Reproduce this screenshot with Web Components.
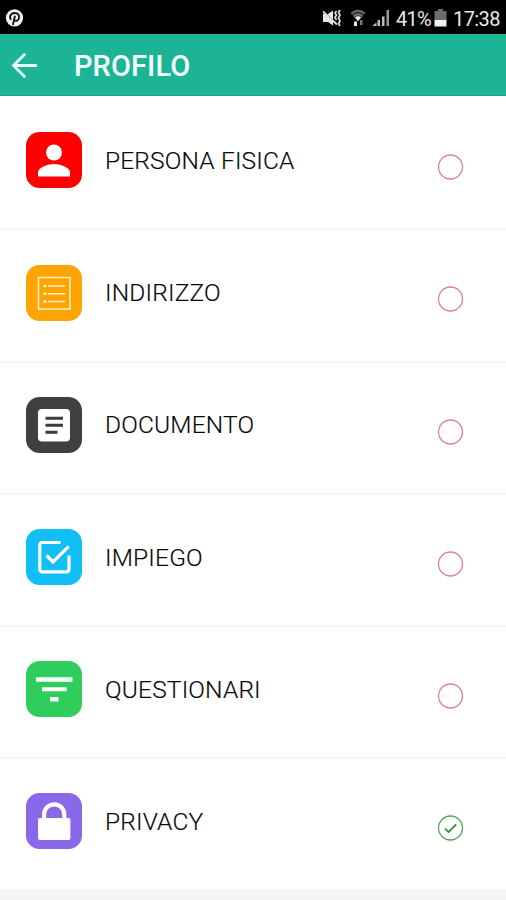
<!DOCTYPE html>
<html lang="it">
<head>
<meta charset="utf-8">
<title>Profilo</title>
<style>
body{margin:0;background:#f4f4f5;font-family:Roboto,"Liberation Sans",sans-serif}
</style>
</head>
<body>
<profile-screen></profile-screen>
<script>
const define = (name, html) => {
  const t = document.createElement('template');
  t.innerHTML = html;
  customElements.define(name, class extends HTMLElement {
    constructor() {
      super();
      this.attachShadow({mode: 'open'}).append(t.content.cloneNode(true));
    }
  });
};

const icons = {
  person: '<circle cx="28" cy="20.5" r="8"/><path d="M12 44.5v-4.2c0-5.200 10.500-8.300 16-8.300s16 3.100 16 8.300v4.200z"/>',
  list: '<g fill="none" stroke="#fff0c8"><rect x="12.500" y="12.500" width="31.500" height="31.500" stroke-width="1.500"/><path d="M22 21h17M22 28.800h17M22 36.600h17" stroke-width="1.500"/><path d="M17.500 21h3M17.500 28.800h3M17.500 36.600h3" stroke-width="2.600"/></g>',
  document: '<rect x="12" y="12" width="32" height="32.500" rx="4"/><path d="M19.500 21.200h17.500M19.500 28.200h17.500M19.500 35.300h12" fill="none" stroke="#3b3b3b" stroke-width="3"/>',
  check: '<path d="M34.500 13.500H16.300a2.500 2.500 0 0 0-2.500 2.500v24.300a2.500 2.500 0 0 0 2.500 2.500h24.200a2.500 2.500 0 0 0 2.500-2.500V26.500M20.500 26.500l6.500 6.500L42.700 17.300" fill="none" stroke="#fff" stroke-width="3.200"/>',
  filter: '<path d="M10 16.300h36.500v4.400H10zM16 26.300h24.500v4H16zM24 36h8.500v4.500H24z"/>',
  lock: '<path d="M14 25h2v-3.500a12.200 12.200 0 0 1 24.400 0V25h2a2 2 0 0 1 2 2v18a2 2 0 0 1-2 2H14a2 2 0 0 1-2-2V27a2 2 0 0 1 2-2zm6.200 0h16v-3.500a8 8 0 0 0-16 0z" fill-rule="evenodd"/>'
};

customElements.define('tile-icon', class extends HTMLElement {
  constructor() {
    super();
    this.attachShadow({mode: 'open'}).innerHTML = `<style>
      :host{display:block;width:56px;height:56px;border-radius:13.500px;background:${this.getAttribute('color')}}
      svg{display:block;fill:#fff}
    </style><svg width="56" height="56" viewBox="0 0 56 56">${icons[this.getAttribute('name')]}</svg>`;
  }
});

customElements.define('state-mark', class extends HTMLElement {
  constructor() {
    super();
    const done = this.hasAttribute('done');
    this.attachShadow({mode: 'open'}).innerHTML = `<style>:host,svg{display:block}</style>
      <svg width="26" height="26" viewBox="0 0 26 26" fill="none" stroke="${done ? '#58a35c' : '#db8388'}">
      <circle cx="12.500" cy="13" r="12" stroke-width="1.300"/>
      ${done ? '<path d="M7 13.500l3.500 3.500 7.700-7.700" stroke="#278b2c" stroke-width="1.700"/>' : ''}</svg>`;
  }
});

define('status-bar', `<style>
  :host{display:flex;align-items:flex-start;height:34px;background:#000;color:#e8e8e8;box-sizing:border-box;padding:0 6px 0 5px}
  svg{display:block;flex:none}
  .pin{margin:8px auto 0 0}
  .mute{margin:9px 8px 0 0}.wifi{margin:9px 5px 0 0}.signal{margin:9px 6px 0 0}
  .bat{margin:9px 6px 0 2px}
  span{font-size:20px;line-height:39px;white-space:nowrap}
  .pct{width:36px;letter-spacing:-.75px}.time{width:47px;letter-spacing:-.6px}
</style>
<svg class="pin" width="19" height="19" viewBox="0 0 19 19"><circle cx="9.500" cy="9.800" r="8.600" fill="#f2f2f2"/><path d="M6 11.700C3.600 8 6.300 5 9.700 5c3.200 0 5 2.100 4.300 5-.6 2.500-3 3.700-4.700 2M10 7.800L7.800 17" fill="none" stroke="#111" stroke-width="1.800"/></svg>
<svg class="mute" width="20" height="18" viewBox="0 0 20 18"><path d="M1 5h5l5-3.500v15L6 13H1z" fill="#e8e8e8"/><path d="M2 2l13 13" stroke="#000" stroke-width="1"/><path d="M1 2.500l14 13" stroke="#ddd" stroke-width="1.800"/><path d="M14.500 2l-1.500 2 1.500 2-1.500 2.500 1.500 2.500M18 1l-1.500 2.500 1.500 2.500-1.500 3 1.500 3-1.500 3 1.500 2" fill="none" stroke="#ddd" stroke-width="1.700"/></svg>
<svg class="wifi" width="16" height="18" viewBox="0 0 16 18"><path d="M1 4.500Q8-1.500 15 4.500L8 13z" fill="#3c3c3c"/><path d="M1 4.500Q8-1.500 15 4.500M3.500 7.500Q8 3.500 12.500 7.500" fill="none" stroke="#777" stroke-width="1.400"/><path d="M5 8.500Q8 6 11 8.500L8 12z" fill="#eee"/><path d="M4 12.500h3V17H4z" fill="#eee"/><path d="M10 11h2.500v5H10z" fill="#777"/></svg>
<svg class="signal" width="19" height="18" viewBox="0 0 19 18"><path d="M1 17l4.500-3.500V17zM6.500 11H9v6H6.500zM11 7.500h2.500V17H11z" fill="#bbb"/><path d="M15.500 1H18v16h-2.500z" fill="#999"/></svg>
<span class="pct">41%</span>
<svg class="bat" width="13" height="18" viewBox="0 0 13 18"><path d="M4 0h5v2h3.500v9H.5V2H4z" fill="#6d6d6d"/><path d="M.5 11h12v6.500H.5z" fill="#f2f2f2"/></svg>
<span class="time">17:38</span>`);

define('app-header', `<style>
  :host{display:flex;align-items:center;height:62px;box-sizing:border-box;background:#1db496;border-bottom:1px solid #12a486;color:#f3fffc;padding:1px 0 0 11px}
  svg{display:block;margin:0 36px 0 0}
  h1{margin:0;font-size:29px;line-height:34px;font-weight:500;letter-spacing:.1px;padding-top:2px}
</style>
<svg width="27" height="27" viewBox="0 0 27 27" fill="none" stroke="#e9fffa" stroke-width="2.800"><path d="M26 13.500H3M14.200 1.800L2.500 13.500l11.700 11.700"/></svg>
<h1><slot></slot></h1>`);

define('profile-row', `<style>
  :host{display:flex;align-items:flex-start;height:132.200px;box-sizing:border-box;padding:34.200px 42px 0 26px;background:#fff;border-bottom:2px solid #f5f5f5}
  .label{flex:1;margin:12.500px 0 0 23px;font-size:24.500px;line-height:32px;font-weight:300;letter-spacing:.17px;color:#080808;-webkit-text-stroke:.15px #080808;white-space:nowrap}
  .state{margin-top:21.700px}
</style>
<slot name="icon"></slot><div class="label"><slot></slot></div><div class="state"><slot name="state"></slot></div>`);

define('profile-screen', `<style>:host{display:block;height:900px;overflow:hidden;background:#f4f4f5}main{display:block;padding-top:2.300px;background:#fff}</style>
<status-bar></status-bar>
<app-header>PROFILO</app-header>
<main></main>
`);

const rows = [
  ['PERSONA FISICA', 'person', '#fe0000'],
  ['INDIRIZZO', 'list', '#ffa503'],
  ['DOCUMENTO', 'document', '#404040'],
  ['IMPIEGO', 'check', '#12bff5'],
  ['QUESTIONARI', 'filter', '#2fcd5b'],
  ['PRIVACY', 'lock', '#8968e9', 'done']
];
document.querySelector('profile-screen').shadowRoot.querySelector('main').innerHTML = rows.map(([label, icon, color, done = '']) =>
  `<profile-row><tile-icon slot="icon" name="${icon}" color="${color}"></tile-icon>${label}<state-mark slot="state" ${done}></state-mark></profile-row>`).join('');
</script>
</body>
</html>
